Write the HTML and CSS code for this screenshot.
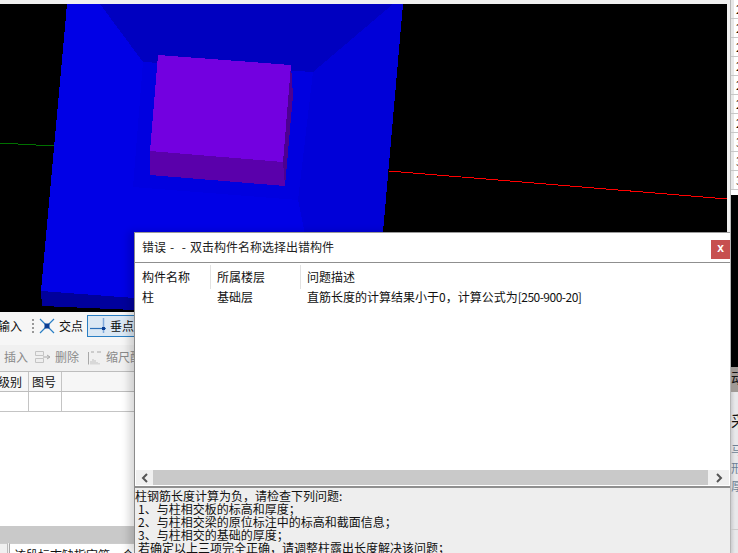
FILE: index.html
```html
<!DOCTYPE html>
<html lang="zh-CN">
<head>
<meta charset="utf-8">
<title>错误</title>
<link rel="stylesheet" href="styles.css">
</head>
<body>
<div class="desktop">
  <div class="main">
    <div class="topband"></div>
    <svg class="scene" width="730" height="308" viewBox="0 4 730 308">
      <rect class="s-bg" x="0" y="4" width="727" height="308"/>
      <polygon class="s-left" points="67,4 100,4 143,62 133,187 41,291"/>
      <polygon class="s-top" points="100,4 393,4 313,72 143,62"/>
      <polygon class="s-right" points="393,4 403,4 376,312 321,312 298,200 313,72"/>
      <polygon class="s-bottom" points="133,187 298,200 321,312 41,291"/>
      <polygon class="s-side" points="41,291 321,312 134,312 134,310 42,306"/>
      <polygon class="s-well" points="143,62 313,72 298,200 133,187"/>
      <polygon class="s-ptop" points="158,55 291,65 283,162 150,151"/>
      <polygon class="s-pfront" points="150,151 283,162 285,186 150,175"/>
      <polygon class="s-pside" points="291,65 293,95 285,186 283,162"/>
      <line class="s-green" x1="0" y1="143" x2="54" y2="146"/>
      <line class="s-red" x1="389" y1="171" x2="727" y2="199"/>
    </svg>
    <div class="bar1">
      <span class="cut">输入</span>
      <span class="grip"></span>
      <svg class="ico-cross" width="16" height="16" viewBox="0 0 16 16"><path d="M1 1L15 15M15 1L1 15" stroke="#2a7fc4" stroke-width="1.2"/><rect x="5.500" y="5.500" width="5" height="5" fill="#0b3f94"/></svg>
      <span class="lbl">交点</span>
      <span class="toggle">
        <svg width="17" height="17" viewBox="0 0 17 17"><path d="M13.500 1V16" stroke="#7fa9dc" stroke-width="1.500"/><path d="M0 11.500H16" stroke="#2a6fb8" stroke-width="1.200"/><rect x="12" y="10" width="3" height="3" fill="#0b3f94"/></svg>
        <span class="lbl">垂点</span>
      </span>
    </div>
    <div class="bar2">
      <span class="dim first">插入</span>
      <svg class="ico-del" width="16" height="14" viewBox="0 0 16 14"><path d="M0.500 1.500H8.500V5.500H0.500ZM0.500 8.500H8.500V12.500H0.500Z" fill="#eee" stroke="#c4c4c4"/><path d="M8 7H14M12 5L15 7L12 9" fill="none" stroke="#a8a8a8"/></svg>
      <span class="dim">删除</span>
      <svg class="ico-scale" width="13" height="15" viewBox="0 0 13 15"><path d="M0.500 2V14.500M3 2H6M9 2H13" stroke="#a8a8a8"/><path d="M3 14.500V11M5 14.500V9M7 14.500V10M9 14.500V12M11 14.500V13" stroke="#c0c0c0"/></svg>
      <span class="dim">缩尺配筋</span>
    </div>
    <div class="grid-head">
      <span class="c1 cut-one">级别</span><span class="c2">图号</span><span class="c3"></span>
    </div>
    <div class="grid-row">
      <span class="c1"></span><span class="c2"></span><span class="c3"></span>
    </div>
    <div class="filler"></div>
    <div class="lower-track"></div>
    <div class="status"><span class="status-tab"></span><span class="status-text">该段标志缺指定第一个A</span></div>
  </div>

  <div class="strip">
    <ul class="mini-rows">
      <li>2</li><li>2</li><li>2</li><li>2</li><li>2</li><li>2</li><li>2</li><li>3</li><li>3</li><li>3</li>
    </ul>
    <div class="mini-gap"></div>
    <div class="mini-black"></div>
    <div class="mini-grey">动</div>
    <div class="mini-panel">
      <span class="mini-title">采</span>
      <span class="mini-note">马</span>
      <span class="mini-note">形</span>
      <span class="mini-note">厚</span>
      <span class="mini-rule"></span>
    </div>
  </div>

  <section class="dialog">
    <header class="dlg-title">
      <h1>错误 -  - 双击构件名称选择出错构件</h1>
      <button class="dlg-close" type="button">x</button>
    </header>
    <div class="dlg-list">
      <div class="dlg-head">
        <span class="col-a">构件名称</span><span class="col-b">所属楼层</span><span class="col-c">问题描述</span>
      </div>
      <div class="dlg-row">
        <span class="col-a">柱</span><span class="col-b">基础层</span><span class="col-c">直筋长度的计算结果小于0，计算公式为<span class="formula">[250-900-20]</span></span>
      </div>
    </div>
    <div class="dlg-scroll">
      <span class="arrow">
        <svg width="8" height="10" viewBox="0 0 8 10"><path d="M6 1L2 5L6 9" fill="none" stroke="#555" stroke-width="2"/></svg>
      </span>
      <span class="thumb"></span>
      <span class="arrow right">
        <svg width="8" height="10" viewBox="0 0 8 10"><path d="M2 1L6 5L2 9" fill="none" stroke="#555" stroke-width="2"/></svg>
      </span>
    </div>
    <div class="dlg-help">
      <p>柱钢筋长度计算为负，请检查下列问题:</p>
      <p class="ind">1、与柱相交板的标高和厚度；</p>
      <p class="ind">2、与柱相交梁的原位标注中的标高和截面信息；</p>
      <p class="ind">3、与柱相交的基础的厚度；</p>
      <p class="ind">若确定以上三项完全正确，请调整柱露出长度解决该问题；</p>
    </div>
  </section>
</div>
</body>
</html>
```

FILE: styles.css
```css
* { box-sizing: border-box; }
html, body { margin: 0; padding: 0; height: 100%; overflow: hidden; background: #f0f0f0; }
body { font: 12px/14px "Noto Sans CJK SC", "Liberation Sans", sans-serif; color: #111; }

.desktop { position: relative; display: flex; width: 738px; height: 553px; overflow: hidden; }
.main { display: flex; flex-direction: column; width: 730px; height: 553px; overflow: hidden; background: #fff; }
.topband { flex: 0 0 4px; background: #f0f0f0; }
.scene { display: block; flex: 0 0 308px; background: #f0f0f0; shape-rendering: crispEdges; }

.s-bg { fill: #000; }
.s-side { fill: #00009c; }
.s-left { fill: #0000e6; }
.s-top { fill: #0000c0; }
.s-right { fill: #0000d8; }
.s-bottom { fill: #0000e6; }
.s-well { fill: #0000e0; }
.s-ptop { fill: #7300e0; }
.s-pfront { fill: #5a00ab; }
.s-pside { fill: #4c0090; }
.s-green { stroke: #007000; stroke-width: 1; }
.s-red { stroke: #ff0000; stroke-width: 1; }

.bar1 { flex: 0 0 33px; display: flex; align-items: center; padding-bottom: 6px; background: #f6f6f6; }
.cut { margin-left: -2px; width: 24px; }
.grip { width: 2px; height: 14px; margin-left: 10px; background: repeating-linear-gradient(#999 0 2px, transparent 2px 4px); }
.ico-cross { margin-left: 5px; }
.lbl { display: inline-block; }
.bar1 > .lbl { margin-left: 4px; }
.toggle { display: flex; align-items: center; gap: 3px; width: 60px; height: 22px; margin-left: 4px; padding-left: 2px; border: 1px solid #2a7fc4; background: #dbe8f4; }

.bar2 { flex: 0 0 26px; display: flex; align-items: center; padding-bottom: 2px; background: #f0f0f0; }
.dim { color: #8a8a8a; white-space: nowrap; }
.dim.first { margin-left: 4px; }
.ico-del { margin: 0 4px 0 7px; }
.ico-scale { margin: 0 5px 0 9px; }

.grid-head, .grid-row { display: flex; flex: 0 0 20px; border-top: 1px solid #bdbdbd; background: #fff; }
.grid-head { background: #f6f6f6; }
.grid-row { border-bottom: 1px solid #c4c4c4; flex-basis: 21px; }
.c1 { width: 29px; border-right: 1px solid #c4c4c4; overflow: hidden; }
.c2 { width: 33px; padding-left: 3px; border-right: 1px solid #c4c4c4; }
.c3 { flex: 1; }
.cut-one { text-indent: -2px; line-height: 19px; }
.grid-head .c2 { line-height: 19px; }

.filler { flex: 1; background: #fff; }
.lower-track { flex: 0 0 17px; background: #c9c9c9; }
.status { display: flex; flex: 0 0 10px; background: #f0f0f0; overflow: hidden; }
.status-tab { width: 8px; border-top: 1px solid #ccc; border-right: 1px solid #bbb; }
.status-text { flex: 1; padding: 4px 0 0 4px; border-top: 1px solid #ccc; border-left: 1px solid #aaa; margin-left: 1px; background: #fff; white-space: nowrap; }

.strip { display: flex; flex-direction: column; flex: 1; overflow: hidden; background: #e4e4e6; border-left: 1px solid #b8b8b8; }
.mini-rows { flex: 0 0 191px; margin: 0; padding: 0; list-style: none; background: #fff; }
.mini-rows li { height: 19px; padding-left: 5px; line-height: 18px; border-bottom: 1px solid #c8c8c8; background: linear-gradient(90deg, #e8e8e8 0 3px, #fff 3px); }
.mini-gap { flex: 0 0 4px; background: #fff; }
.mini-black { flex: 0 0 172px; background: #000; }
.mini-grey { flex: 0 0 25px; padding-top: 3px; background: #a09a96; white-space: nowrap; font-size: 14px; }
.mini-panel { flex: 1; display: flex; flex-direction: column; background: linear-gradient(90deg, #cfcfd2, #e8e8ea 4px); white-space: nowrap; }
.mini-title { margin-top: 19px; font-size: 16px; line-height: 18px; }
.mini-note { margin-top: 3px; color: #6c7f94; line-height: 15px; }
.mini-title + .mini-note { margin-top: 13px; }
.mini-rule { margin-top: 36px; border-top: 1px solid #ccc; }

.dialog { position: absolute; left: 134px; top: 232px; display: flex; flex-direction: column; width: 596px; height: 321px; background: #fff; border-left: 1px solid #8b8b8b; border-top: 1px solid #9a9a9a; box-shadow: -5px 0 8px rgba(0, 0, 0, .16); }
.dlg-title { display: flex; flex: 0 0 30px; align-items: flex-start; justify-content: space-between; padding: 0 0 0 7px; border-bottom: 1px solid #8f8f8f; }
.dlg-title h1 { margin: 0; font-size: 12px; font-weight: 400; line-height: 28px; color: #222; white-space: pre; word-spacing: 1.2px; }
.dlg-close { width: 19px; height: 19px; margin: 7px 0 0; padding: 0 0 3px; border: 0; background: #c75050; color: #fff; font: 700 12px/14px "Liberation Sans", sans-serif; }
.dlg-list { flex: 1; padding-top: 2px; }
.dlg-head { display: flex; height: 24px; align-items: center; }
.dlg-row { display: flex; height: 16px; align-items: center; }
.col-a { width: 76px; padding-left: 7px; }
.col-b { width: 90px; padding-left: 6px; }
.col-c { flex: 1; padding-left: 6px; white-space: nowrap; }
.formula { letter-spacing: -.5px; }
.dlg-head .col-a, .dlg-head .col-b { border-right: 1px solid #e2e2e2; line-height: 24px; }
.dlg-scroll { display: flex; flex: 0 0 15px; margin: 0 1px 1px 1px; background: #f0f0f0; }
.arrow { display: flex; width: 17px; align-items: center; justify-content: center; }
.arrow.right { width: 21px; }
.thumb { flex: 1; background: #c9c9c9; }
.dlg-help { flex: 0 0 67px; padding-top: 1px; background: #eee; border-top: 2px solid #8f8f8f; overflow: hidden; font-size: 12px; line-height: 13px; color: #111; }
.dlg-help p { margin: 0; white-space: nowrap; }
.dlg-help .ind { padding-left: 3px; }
```
